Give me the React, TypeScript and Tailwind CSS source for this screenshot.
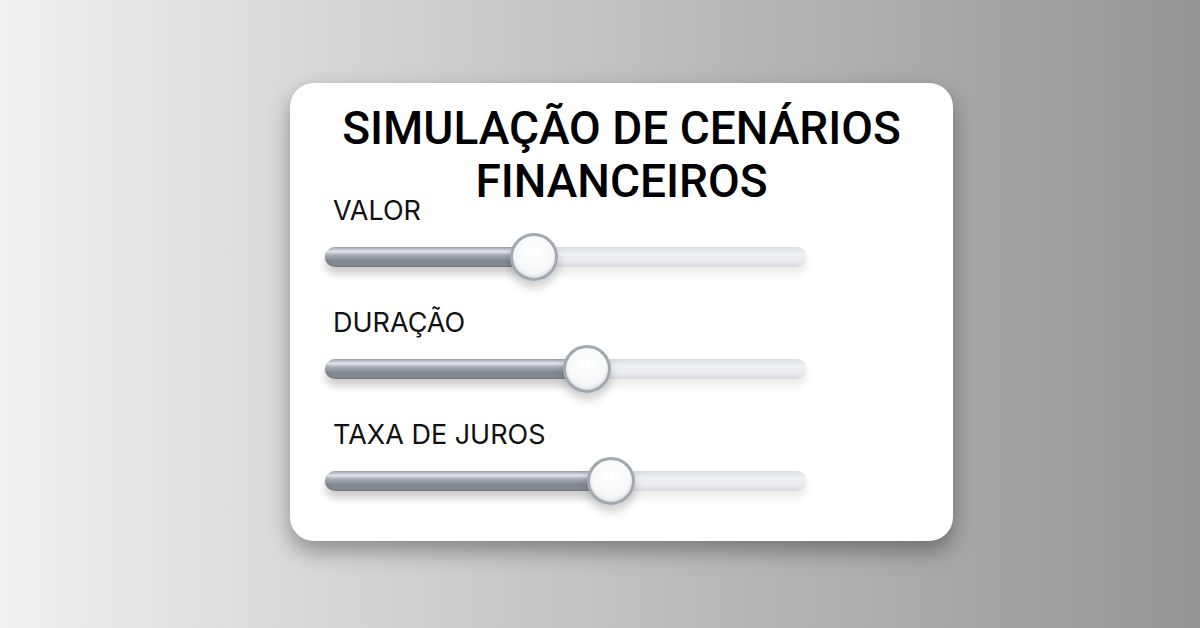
import React from "react";

type SliderProps = {
  label: string;
  fill: number; // px from track start to thumb centre
};

function MetalSlider({ label, fill }: SliderProps) {
  return (
    <div className="flex flex-col">
      <span className="pl-2 text-[27px] leading-[30px] text-[#111] [font-family:Inter,'Noto_Sans',sans-serif]">
        {label}
      </span>
      <div className="relative mt-[7px] flex h-12 w-[482px] items-center">
        {/* empty track */}
        <div className="h-5 w-full rounded-full bg-[linear-gradient(to_bottom,#d9dce1_0%,#eef0f3_35%,#e9ebee_70%,#d6d9de_100%)] shadow-[0_7px_9px_rgba(0,0,0,0.08)]" />
        {/* filled part */}
        <div
          className="absolute left-0 top-1/2 h-5 -translate-y-1/2 rounded-full bg-[linear-gradient(to_bottom,#9aa0a7_0%,#e2e5e9_22%,#a3a9b0_42%,#7e848c_72%,#8f949b_100%)] shadow-[0_7px_9px_rgba(0,0,0,0.13),inset_0_-1px_2px_rgba(60,65,72,0.4)]"
          style={{ width: fill + 10 }}
        />
        {/* thumb */}
        <div
          className="absolute top-0 h-12 w-12 -translate-x-1/2 rounded-full border-[3px] border-[#a2a8b0] bg-[radial-gradient(circle_at_50%_40%,#ffffff_0%,#f7f8f9_55%,#e3e6ea_100%)] shadow-[0_7px_10px_rgba(0,0,0,0.18),inset_0_-2px_3px_rgba(0,0,0,0.08),inset_0_2px_2px_rgba(255,255,255,0.9)]"
          style={{ left: fill }}
        />
      </div>
    </div>
  );
}

export default function App() {
  const sliders: SliderProps[] = [
    { label: "VALOR", fill: 209 },
    { label: "DURAÇÃO", fill: 262 },
    { label: "TAXA DE JUROS", fill: 286 },
  ];

  return (
    <div className="h-[628px] w-[1200px] overflow-hidden bg-gradient-to-r from-[#f0f0f0] to-[#959595] pl-[290px] pt-[83px]">
      <div className="h-[458px] w-[663px] rounded-[24px] bg-white pt-[19px] shadow-[0_10px_22px_rgba(0,0,0,0.35)]">
        <h1 className="text-center text-[46px] font-medium leading-[53px] text-black [font-family:Roboto,'Liberation_Sans',sans-serif]">
          SIMULAÇÃO DE CENÁRIOS
          <br />
          FINANCEIROS
        </h1>
        <div className="-mt-[12px] ml-[35px] flex w-[482px] flex-col gap-[27px]">
          {sliders.map((s) => (
            <MetalSlider key={s.label} label={s.label} fill={s.fill} />
          ))}
        </div>
      </div>
    </div>
  );
}
